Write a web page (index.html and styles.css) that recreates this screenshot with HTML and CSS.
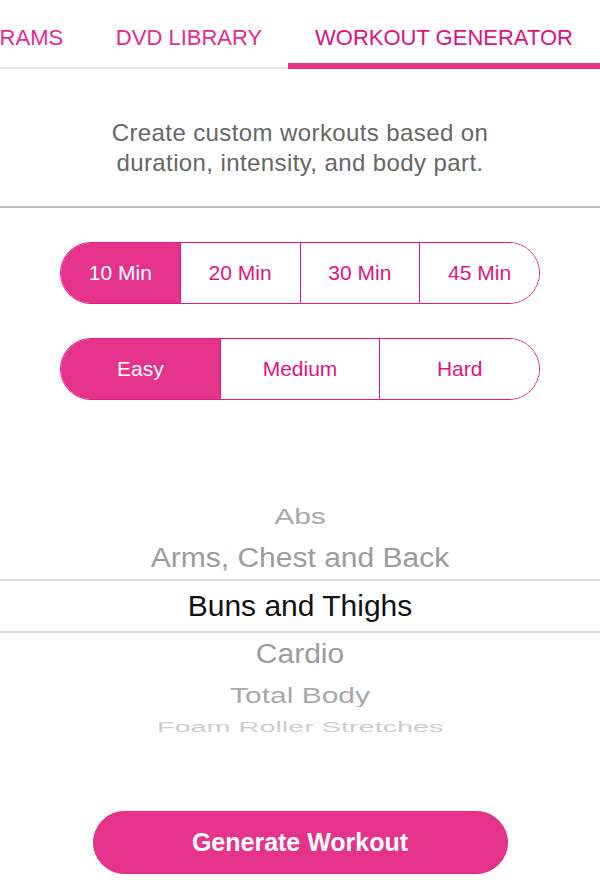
FILE: index.html
```html
<!DOCTYPE html>
<html lang="en">
<head>
    <meta charset="UTF-8">
    <meta name="viewport" content="width=device-width, initial-scale=1.0">
    <title>Workout Generator</title>
    <link rel="stylesheet" href="styles.css">
</head>
<body>

<nav class="tabs">
    <a class="tab tab-programs">PROGRAMS</a>
    <a class="tab tab-dvd">DVD LIBRARY</a>
    <a class="tab tab-generator active">WORKOUT GENERATOR</a>
</nav>

<p class="intro">Create custom workouts based on<br>duration, intensity, and body part.</p>

<div class="segmented">
    <button class="segment selected">10 Min</button>
    <button class="segment">20 Min</button>
    <button class="segment">30 Min</button>
    <button class="segment">45 Min</button>
</div>

<div class="segmented">
    <button class="segment selected">Easy</button>
    <button class="segment">Medium</button>
    <button class="segment">Hard</button>
</div>

<div class="picker">
    <div class="picker-row far"><span>Abs</span></div>
    <div class="picker-row near"><span>Arms, Chest and Back</span></div>
    <div class="picker-row current"><span>Buns and Thighs</span></div>
    <div class="picker-row near"><span>Cardio</span></div>
    <div class="picker-row far"><span>Total Body</span></div>
    <div class="picker-row edge"><span>Foam Roller Stretches</span></div>
</div>

<button class="generate">Generate Workout</button>

</body>
</html>
```

FILE: styles.css
```css
body {
    font-family: 'Liberation Sans', Arial, sans-serif;
    background-color: #fff;
    margin: 0;
    padding: 0;
    width: 600px;
    overflow: hidden;
}

/* top tabs */
.tabs {
    display: flex;
    height: 69px;
    box-sizing: border-box;
    border-bottom: 2px solid #e3e3e3;
}

.tab {
    box-sizing: border-box;
    height: 67px;
    padding-top: 25px;
    font-size: 22px;
    line-height: 26px;
    text-align: center;
    white-space: nowrap;
    color: #e62a90;
}

.tab-programs {
    width: 182px;
    margin-left: -92px;
}

.tab-dvd {
    width: 198px;
}

.tab-generator {
    width: 312px;
}

.tab.active {
    height: 69px;
    margin-bottom: -2px;
    border-bottom: 6px solid #e6338d;
    color: #e0107f;
}

.intro {
    margin: 0;
    padding: 49px 0 28px;
    font-size: 24px;
    letter-spacing: 0.4px;
    line-height: 30px;
    text-align: center;
    color: #666;
    border-bottom: 2px solid #bdbdbd;
}

/* segmented controls */
.segmented {
    display: flex;
    width: 480px;
    height: 62px;
    box-sizing: border-box;
    margin: 34px auto 0;
    border: 1.5px solid #e5168a;
    border-radius: 31px;
    overflow: hidden;
}

.segment {
    flex: 1;
    border: none;
    border-left: 1.5px solid #e5168a;
    background-color: #fff;
    color: #e4127f;
    font-family: inherit;
    font-size: 21px;
    padding: 0;
}

.segment:first-child {
    border-left: none;
}

.segment.selected {
    background-color: #e5338b;
    color: #fff;
}

/* body part wheel */
.picker {
    margin-top: 95px;
}

.picker-row {
    height: 42px;
    display: flex;
    align-items: center;
    justify-content: center;
    font-size: 30px;
    white-space: nowrap;
}

.picker-row span {
    display: block;
    line-height: 34px;
}

.picker-row.far span {
    color: #a9a9a9;
    transform: scaleY(0.75);
}

.picker-row.near span {
    color: #9c9c9c;
    transform: scaleY(0.9);
}

.picker-row.near:nth-child(4) {
    height: 41px;
}

.picker-row.current {
    height: 54px;
    box-sizing: border-box;
    border-top: 2px solid #dcdcdc;
    border-bottom: 2px solid #dcdcdc;
    color: #111;
}

.picker-row.edge {
    height: 21px;
}

.picker-row.edge span {
    color: #cdcdcd;
    transform: scale(0.96, 0.5);
}

.generate {
    display: block;
    width: 415px;
    height: 63px;
    margin: 74px auto 0;
    border: 1px solid #df2a86;
    border-radius: 32px;
    background-color: #e5338b;
    color: #fff;
    font-family: inherit;
    font-size: 25px;
    font-weight: bold;
    cursor: pointer;
}
```
